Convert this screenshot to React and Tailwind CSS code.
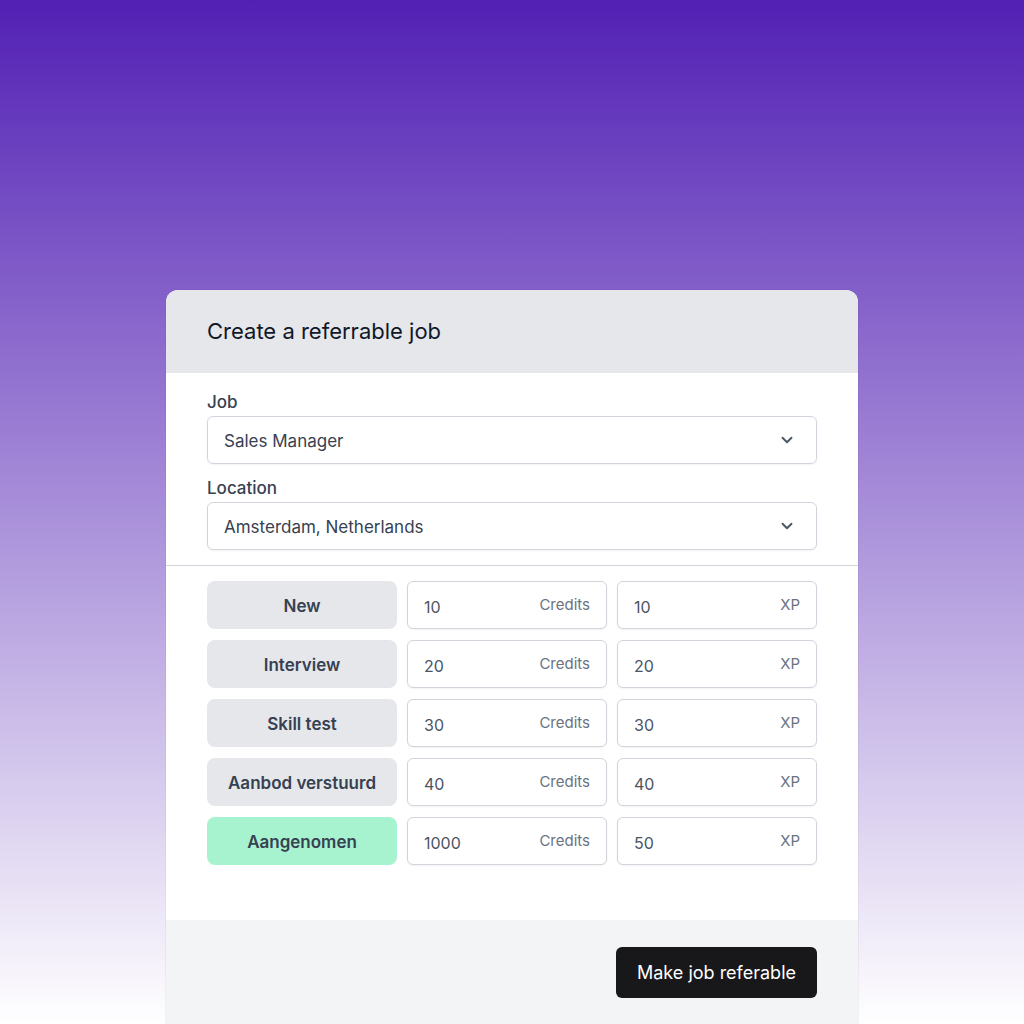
import React from "react";

const rows = [
  { stage: "New", credits: "10", xp: "10" },
  { stage: "Interview", credits: "20", xp: "20" },
  { stage: "Skill test", credits: "30", xp: "30" },
  { stage: "Aanbod verstuurd", credits: "40", xp: "40" },
  { stage: "Aangenomen", credits: "1000", xp: "50", hired: true },
];

function Chevron() {
  return (
    <svg width="18" height="18" viewBox="0 0 24 24" fill="none" stroke="#4b5563" strokeWidth="2.5" strokeLinecap="round" strokeLinejoin="round">
      <path d="M6 9l6 6 6-6" />
    </svg>
  );
}

function Select({ value }) {
  return (
    <div className="h-[48px] flex items-center justify-between rounded-md border border-[#d1d5db] bg-white pl-4 pr-[20px] shadow-[0_1px_2px_rgba(0,0,0,0.05)]">
      <span className="pt-[3px] text-[17px] text-[#374151]">{value}</span>
      <Chevron />
    </div>
  );
}

function NumInput({ value, unit }) {
  return (
    <div className="h-[48px] flex items-center justify-between rounded-md border border-[#d1d5db] bg-white pl-4 pr-[16px] shadow-[0_1px_2px_rgba(0,0,0,0.05)]">
      <span className="pt-[3px] text-[16px] text-[#4b5563]">{value}</span>
      <span className="text-[15px] text-[#6b7280]">{unit}</span>
    </div>
  );
}

export default function App() {
  return (
    <div
      className="w-[1024px] h-[1024px] overflow-hidden bg-[linear-gradient(to_bottom,#5220b4,#ffffff)] pt-[290px]"
      style={{ fontFamily: "Inter, 'Noto Sans', sans-serif" }}
    >
      <div className="mx-auto w-[692px] rounded-t-xl overflow-hidden bg-white shadow-[0_0_0_1px_rgba(0,0,0,0.04)]">
        <div className="h-[83px] bg-[#e5e7eb] flex items-center px-[41px]">
          <h1 className="text-[22px] text-[#111827] font-normal">Create a referrable job</h1>
        </div>
        <div className="px-[41px] pt-[16px] pb-[15px]">
          <div className="h-[24px] pt-[3px] mb-[3px] flex items-center text-[17px] font-medium text-[#374151]">Job</div>
          <Select value="Sales Manager" />
          <div className="h-[24px] pt-[3px] mt-[11px] mb-[3px] flex items-center text-[17px] font-medium text-[#374151]">Location</div>
          <Select value="Amsterdam, Netherlands" />
        </div>
        <div className="h-px bg-[#d1d5db]" />
        <div className="px-[41px] pt-[15px] pb-[55px] flex flex-col gap-[11px]">
          {rows.map((r) => (
            <div key={r.stage} className="grid grid-cols-[190px_200px_200px] gap-[10px]">
              <div
                className={
                  "h-[48px] pt-[4px] rounded-lg flex items-center justify-center text-[17px] font-semibold text-[#374151] " +
                  (r.hired ? "bg-[#a7f3d0]" : "bg-[#e5e7eb]")
                }
              >
                {r.stage}
              </div>
              <NumInput value={r.credits} unit="Credits" />
              <NumInput value={r.xp} unit="XP" />
            </div>
          ))}
        </div>
        <div className="bg-[#f3f4f6] h-[104px] px-[41px] pt-[27px] flex justify-end items-start">
          <button className="h-[51px] w-[201px] rounded-md bg-[#18181b] text-white text-[18px] font-normal">
            Make job referable
          </button>
        </div>
      </div>
    </div>
  );
}
